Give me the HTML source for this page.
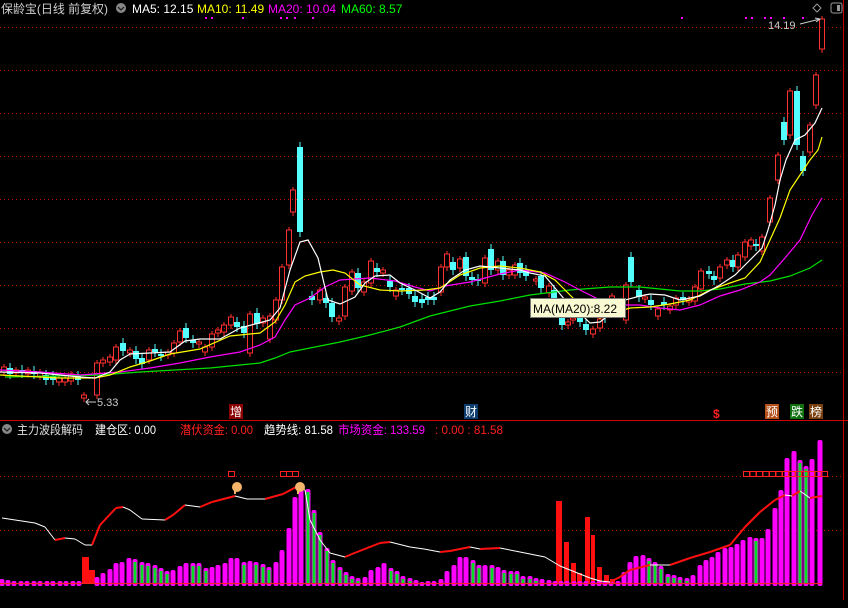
<!DOCTYPE html>
<html><head><meta charset="utf-8">
<style>
html,body{margin:0;padding:0;background:#000;width:848px;height:608px;overflow:hidden}
svg{display:block}
text{font-family:"Liberation Sans","Noto Sans CJK SC",sans-serif}
</style></head>
<body>
<svg id="s" width="848" height="608" xmlns="http://www.w3.org/2000/svg">
<rect width="848" height="608" fill="#000"/>
<g stroke="#c00000" stroke-width="1" stroke-dasharray="1,3">
<line x1="0" y1="27.5" x2="843" y2="27.5"/><line x1="0" y1="70.5" x2="843" y2="70.5"/>
<line x1="0" y1="113.5" x2="843" y2="113.5"/><line x1="0" y1="156.5" x2="843" y2="156.5"/>
<line x1="0" y1="199.5" x2="843" y2="199.5"/><line x1="0" y1="242.5" x2="843" y2="242.5"/>
<line x1="0" y1="285.5" x2="843" y2="285.5"/><line x1="0" y1="328.5" x2="843" y2="328.5"/>
<line x1="0" y1="372.5" x2="843" y2="372.5"/>
<line x1="0" y1="476.5" x2="843" y2="476.5"/><line x1="0" y1="530.5" x2="843" y2="530.5"/>
</g>
<line x1="843.5" y1="0" x2="843.5" y2="600" stroke="#c00000"/>
<line x1="0" y1="420.5" x2="848" y2="420.5" stroke="#d00000"/>
<g id="cand"></g>
<g id="ma" fill="none" stroke-width="1.2"></g>
<g id="ind"></g>
<!-- header -->
<text x="1" y="13" font-size="12" fill="#d0d0d0" textLength="107" lengthAdjust="spacingAndGlyphs">保龄宝(日线 前复权)</text>
<circle cx="121" cy="8" r="5" fill="#888"/><path d="M118 7l3 3 3-3" stroke="#222" fill="none" stroke-width="1.3"/>
<text x="132" y="13" font-size="12" fill="#fff">MA5: 12.15</text>
<text x="197" y="13" font-size="12" fill="#ffff00">MA10: 11.49</text>
<text x="268" y="13" font-size="12" fill="#ff00ff">MA20: 10.04</text>
<text x="341" y="13" font-size="12" fill="#00ff00">MA60: 8.57</text>
<g fill="#ff00ff"><rect x="205" y="17" width="2" height="2"/><rect x="211" y="17" width="2" height="2"/><rect x="242" y="17" width="2" height="2"/><rect x="280" y="17" width="2" height="2"/><rect x="286" y="17" width="2" height="2"/><rect x="294" y="17" width="2" height="2"/><rect x="312" y="17" width="2" height="2"/>
<rect x="681" y="17" width="2" height="2"/><rect x="745" y="17" width="2" height="2"/><rect x="751" y="17" width="2" height="2"/><rect x="764" y="17" width="2" height="2"/><rect x="770" y="17" width="2" height="2"/><rect x="783" y="17" width="2" height="2"/><rect x="802" y="17" width="2" height="2"/></g>
<path d="M817 4l4 4-4 4-4-4z" stroke="#999" fill="none"/>
<rect x="831" y="3" width="11" height="10" rx="2" stroke="#999" fill="none"/><rect x="837" y="5" width="3" height="6" fill="#999"/>
<text x="768" y="29" font-size="11" fill="#ccc">14.19</text>
<path d="M800 24l20-5M815 18l5 1-4 3" stroke="#ccc" fill="none"/>
<text x="97" y="406" font-size="11" fill="#ccc">5.33</text>
<path d="M96 402h-10M89 399l-3 3 3 3" stroke="#ccc" fill="none"/>
<!-- tooltip -->
<rect x="530.5" y="298.5" width="95" height="19" fill="#fafad2" stroke="#777"/>
<text x="533" y="313" font-size="12" fill="#000">MA(MA20):8.22</text>
<!-- markers -->
<rect x="229" y="404" width="14" height="15" fill="#8b0000"/><text x="230" y="416" font-size="12" fill="#fff">增</text>
<rect x="464" y="404" width="14" height="15" fill="#0d3c6e"/><text x="465" y="416" font-size="12" fill="#fff">财</text>
<text x="713" y="418" font-size="12" fill="#ff2020" font-weight="bold">$</text>
<rect x="765" y="404" width="14" height="15" fill="#b5501a"/><text x="766" y="416" font-size="12" fill="#fff">预</text>
<rect x="790" y="404" width="14" height="15" fill="#107010"/><text x="791" y="416" font-size="12" fill="#fff">跌</text>
<rect x="809" y="404" width="14" height="15" fill="#7a4010"/><text x="810" y="416" font-size="12" fill="#fff">榜</text>
<!-- lower header -->
<circle cx="7" cy="429" r="5" fill="#888"/><path d="M4 428l3 3 3-3" stroke="#222" fill="none" stroke-width="1.3"/>
<text x="17" y="434" font-size="12" fill="#e0e0e0" textLength="66" lengthAdjust="spacingAndGlyphs">主力波段解码</text>
<text x="95" y="434" font-size="12" fill="#fff" textLength="61" lengthAdjust="spacingAndGlyphs">建仓区: 0.00</text>
<text x="180" y="434" font-size="12" fill="#ff2020" textLength="73" lengthAdjust="spacingAndGlyphs">潜伏资金: 0.00</text>
<text x="264" y="434" font-size="12" fill="#fff" textLength="69" lengthAdjust="spacingAndGlyphs">趋势线: 81.58</text>
<text x="338" y="434" font-size="12" fill="#ff00ff" textLength="87" lengthAdjust="spacingAndGlyphs">市场资金: 133.59</text>
<text x="435" y="434" font-size="12" fill="#ff2020" textLength="68" lengthAdjust="spacingAndGlyphs">: 0.00 : 81.58</text>
</svg>
<script>
var NS="http://www.w3.org/2000/svg";
function el(p,t,a){var e=document.createElementNS(NS,t);for(var k in a)e.setAttribute(k,a[k]);p.appendChild(e);return e;}
var C=document.getElementById("cand"),M=document.getElementById("ma"),I=document.getElementById("ind");
var cd=[[4,367,372,'r'],[10,368,374,'c'],[16,370,373,'r'],[22,370,373,'c'],[28,370,374,'r'],[34,371,374,'c'],[40,372,376,'r'],[46,375,380,'c'],[53,376,380,'c'],[59,378,382,'r'],[65,378,382,'r'],[71,374,381,'r'],[78,376,380,'c'],[84,395,398,'r'],
[97,363,395,'r'],[103,360,363,'r'],[110,357,362,'r'],[116,347,360,'r'],[123,343,351,'c'],[130,350,353,'r'],[136,351,359,'c'],[142,358,364,'c'],[149,350,360,'r'],[155,349,352,'c'],[161,354,356,'c'],[168,352,355,'r'],[174,343,353,'r'],[180,331,342,'r'],[186,328,338,'c'],[193,340,343,'c'],[199,342,344,'r'],[205,347,352,'r'],[212,334,347,'r'],[218,330,333,'r'],[224,325,332,'r'],[231,317,325,'r'],[237,322,327,'c'],[244,326,333,'c'],[250,314,353,'r'],[257,313,324,'c'],[263,318,323,'r'],[270,316,339,'r'],[276,300,320,'r'],[282,267,300,'r'],[289,230,265,'r'],[293,190,212,'r'],[300,147,232,'c'],[312,296,300,'c'],[320,290,300,'r'],[326,298,303,'c'],[332,303,317,'c'],[339,318,321,'r'],[345,287,316,'r'],[352,272,291,'r'],[358,273,288,'c'],[364,282,292,'r'],[371,261,283,'r'],[377,268,272,'c'],[383,270,273,'r'],[390,281,287,'c'],[396,290,296,'r'],[402,288,290,'c'],[409,288,294,'c'],[415,296,302,'c'],[422,299,303,'c'],
[428,297,300,'c'],[434,297,300,'c'],[441,267,292,'r'],[447,254,267,'r'],[453,262,270,'c'],[460,259,268,'r'],[466,257,276,'c'],[472,277,280,'c'],[478,279,281,'c'],[485,258,283,'r'],[491,249,270,'c'],[498,261,270,'r'],[503,261,275,'c'],[509,270,275,'r'],[515,265,275,'r'],[520,263,273,'c'],[526,270,276,'c'],[536,279,281,'r'],[541,276,288,'c'],[549,286,293,'r'],[554,290,298,'c'],[562,316,325,'c'],[568,322,325,'r'],[573,318,320,'r'],[580,317,322,'c'],[586,324,330,'c'],[593,329,334,'r'],[600,319,328,'r'],[605,313,318,'c'],[612,296,302,'r'],[626,285,320,'r'],[631,257,282,'c'],[639,290,297,'c'],[645,297,299,'r'],[651,300,305,'c'],[658,309,316,'r'],[664,302,305,'c'],[670,306,310,'r'],[676,298,305,'r'],[683,297,300,'c'],[689,299,302,'r'],[695,287,301,'r'],[701,271,289,'r'],[709,271,274,'c'],[714,276,280,'c'],[720,267,278,'r'],[727,260,265,'r'],[733,260,267,'c'],[738,255,267,'r'],[745,242,257,'r'],[751,240,246,'r'],[756,244,246,'c'],[762,237,251,'r'],[770,198,222,'r'],[778,155,180,'r'],[784,122,140,'c'],[790,91,135,'r'],[797,91,145,'c'],[803,156,171,'c'],[810,125,152,'r'],[816,75,105,'r'],[822,19,49,'r']];
cd.forEach(function(c){var x=c[0],t=c[1],b=c[2];
 if(c[3]=='r'){el(C,'line',{x1:x,y1:b,x2:x,y2:b+4,stroke:'#ff3030'});el(C,'line',{x1:x,y1:t-3,x2:x,y2:t,stroke:'#ff3030'});el(C,'rect',{x:x-2.5,y:t,width:5,height:Math.max(1,b-t),fill:'none',stroke:'#ff3030'});}
 else{el(C,'line',{x1:x,y1:t-5,x2:x,y2:b+5,stroke:'#54ffff'});el(C,'rect',{x:x-3,y:t,width:6,height:Math.max(2,b-t),fill:'#54ffff'});}});
function pl(pts,col){el(M,'polyline',{points:pts,stroke:col});}
pl("5,377 60,376 100,375 140,372 175,370 210,368 240,365 260,363 275,358 290,352 310,348 340,342 370,335 400,327 430,316 470,306 500,301 530,295 570,290 610,287 640,287 660,289 680,291 700,291 720,289 745,284 770,281 790,276 810,268 822,260","#00e000");
pl("0,370 40,372 80,375 120,372 150,368 180,363 210,357 240,352 260,345 275,337 285,320 295,305 310,298 325,287 340,280 370,278 395,281 415,287 430,291 445,286 470,282 500,274 520,270 545,273 565,282 580,290 600,300 620,305 640,305 660,308 680,310 700,305 720,296 740,290 760,282 770,275 785,258 800,240 812,215 822,198","#ff00ff");
pl("0,375 60,378 95,378 110,375 130,367 150,361 170,354 200,349 230,336 260,333 275,322 285,305 295,282 305,276 320,272 333,270 345,273 360,285 380,290 400,291 425,290 440,288 460,275 480,268 500,266 520,268 540,272 555,280 565,290 575,300 590,315 600,318 610,314 630,308 650,307 670,304 690,300 710,290 730,283 745,278 760,262 770,240 780,218 790,190 800,175 810,160 818,150 822,137","#ffff00");
pl("0,372 40,373 80,377 95,378 110,372 120,360 130,354 150,353 170,352 185,341 200,339 220,339 240,328 255,324 270,320 280,308 290,270 300,242 308,240 318,258 328,300 340,304 355,297 365,283 375,276 390,275 400,283 415,290 430,298 440,292 450,280 465,270 480,266 500,268 520,270 530,273 545,276 555,288 565,300 575,308 590,323 600,322 615,310 625,300 640,296 650,294 665,295 680,300 700,296 720,285 735,275 745,265 755,255 762,248 768,230 775,205 780,180 786,160 795,140 805,135 815,123 822,108","#ffffff");
var base=584;
var bars=[[2,579],[8,580,1],[14,581],[21,581,1],[27,581],[34,581],[40,581],[47,581],[53,581],[60,581],[66,581],[73,581],[79,581],[97,577],[103,573],[110,569],[116,563],[122,562],[129,558],[135,559,1],[142,562,1],[148,563,1],[155,565,1],[161,568,1],[167,571,1],[173,570],[180,566],[186,563],[193,563,1],[199,563,1],[206,568,1],[212,567],[218,565],[225,563],[231,558],[237,558],[244,562,1],[250,561],[256,562,1],[263,564,1],[269,567,1],[276,562],[282,550],[289,528],[295,497],[301,484],[308,489,1],[314,510,1],[320,532,1],[327,548,1],[333,560,1],[340,567,1],[346,572,1],[352,576,1],[358,578,1],[365,577],[371,570],[378,567],[384,563],[391,568,1],[397,571,1],[403,576,1],[410,578,1],[416,580,1],[422,582,1],[428,581],[434,581],[441,579],[447,571],[454,565],[460,557],[466,557],[473,560,1],[479,565,1],[485,565],[492,565,1],[498,567],[504,570,1],[511,571,1],[517,571,1],[523,576,1],[530,576,1],[536,578,1],[542,579],[549,580],[555,581],[561,581],[567,581],[574,581],[580,581],[586,581],[593,581],[599,581],[605,581],[611,581],[618,581],[624,572],[630,562],[636,556],[643,555],[649,558,1],[655,562,1],[661,566,1],[668,574,1],[674,575,1],[680,577,1],[687,578,1],[693,575],[700,565],[706,560],[712,557],[718,552],[725,548],[731,547],[737,544],[743,540],[750,537],[756,538,1],[762,538],[768,529],[775,508],[781,490],[787,458],[794,451],[800,460,1],[806,466,1],[812,459],[820,440]];
[[82,557,7],[89,570,6],[556,501,6],[564,542,5],[571,563,5],[577,573,5],[585,517,5],[591,535,4],[597,567,5],[604,575,5],[610,579,5]].forEach(function(r){el(I,'rect',{x:r[0],y:r[1],width:r[2],height:base-r[1],fill:'#ff1010'});});
bars.forEach(function(b){var x=b[0],t=b[1];
 el(I,'rect',{x:x-2.5,y:t,width:5,height:base-t+2,rx:2,fill:'#ff00ff'});
 if(b[2])el(I,'rect',{x:x-1.5,y:t+3,width:3,height:base-t-3,fill:'#00e020'});});
el(I,'line',{x1:0,y1:base-0.5,x2:822,y2:base-0.5,stroke:'#ff2020'});
var tp=[[2,518],[35,523],[45,527],[55,540],[65,538],[75,539],[85,545],[92,545],[100,525],[116,508],[123,507],[130,510],[142,519],[165,520],[173,515],[185,505],[200,507],[212,502],[235,496],[247,499],[265,499],[283,494],[298,486],[305,490],[310,520],[320,540],[330,553],[345,557],[352,554],[380,543],[390,542],[410,547],[424,549],[440,552],[450,551],[470,547],[480,549],[500,548],[520,552],[545,557],[560,566],[575,572],[590,578],[600,581],[610,582],[620,577],[630,570],[650,565],[670,565],[690,558],[710,552],[730,545],[745,527],[760,512],[775,500],[785,495],[792,496],[800,491],[810,498],[822,496]];
for(var i=1;i<tp.length;i++){var a=tp[i-1],b=tp[i];var up=b[1]<a[1];
 el(I,'line',{x1:a[0],y1:a[1],x2:b[0],y2:b[1],stroke:up?'#ff1010':'#fff','stroke-width':up?2:1});}
function bx(x){el(I,'rect',{x:x+0.5,y:471.5,width:6,height:5,fill:'none',stroke:'#ff2020'});}
bx(228);bx(280);bx(286);bx(292);for(var x=743;x<826;x+=6.5)bx(x);
[[237,487],[300,487]].forEach(function(h){el(I,'circle',{cx:h[0],cy:h[1],r:5,fill:'#f4b46a'});el(I,'rect',{x:h[0]-3,y:h[1]+1,width:2,height:6,fill:'#f4b46a'});});
</script>
</body></html>
